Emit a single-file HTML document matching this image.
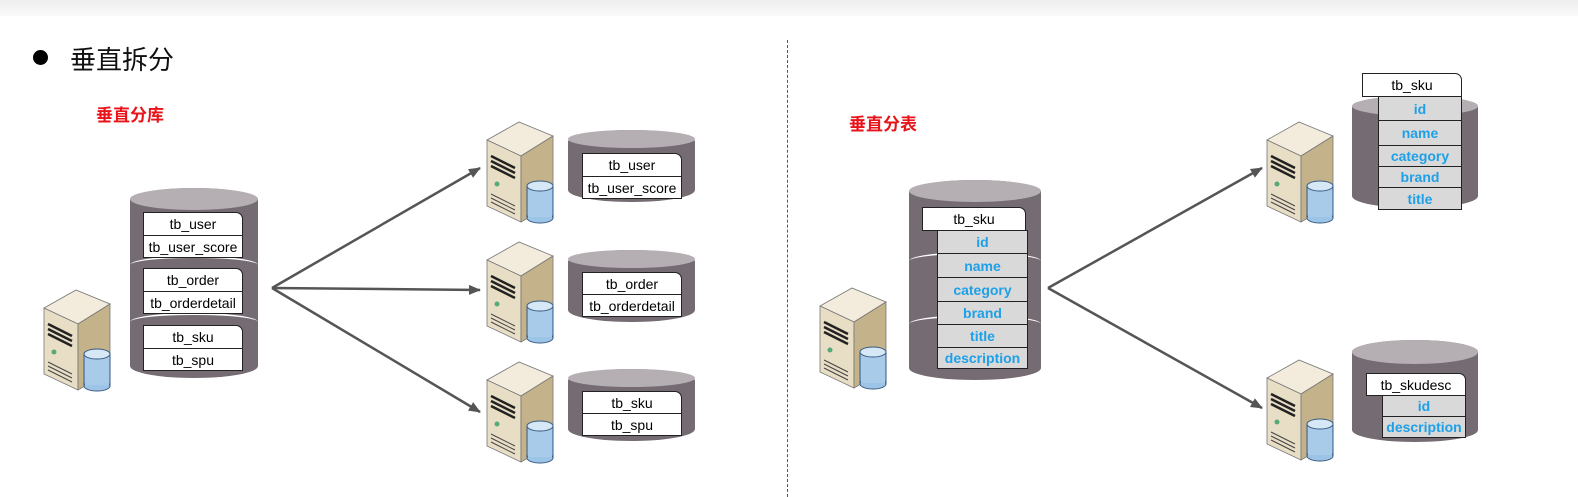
<!DOCTYPE html>
<html><head><meta charset="utf-8"><style>
body{margin:0;width:1578px;height:497px;background:#fff;position:relative;overflow:hidden;font-family:"Liberation Sans","Noto Sans CJK SC",sans-serif}
.a{position:absolute}
.cyl{position:absolute;background:#756b72;border-radius:50%/12px}
.cyl .top{position:absolute;left:0;top:0;right:0;height:22px;border-radius:50%;background:#b5aeb3}
.sep{position:absolute;left:0;right:0;height:16px;border-radius:50%;border-top:2px solid #fff}
.tb{position:absolute;background:#fff;border:1px solid #222;box-sizing:border-box;font-size:14px;color:#000;display:flex;align-items:center;justify-content:center;white-space:nowrap;font-family:"Liberation Sans","DejaVu Sans",sans-serif}
.tbt{border-top-right-radius:7px}
.f{position:absolute;background:#d9d9d9;border:1px solid #222;box-sizing:border-box;font-size:14px;font-weight:bold;color:#1ea0e8;display:flex;align-items:center;justify-content:center;white-space:nowrap}
</style></head><body>
<div class="a" style="left:0;top:0;width:1578px;height:16px;background:linear-gradient(#eee,#fafafa)"></div>
<div class="a" style="left:33px;top:50px;width:15px;height:15px;border-radius:50%;background:#000"></div>
<div class="a" style="left:70px;top:40px;font-size:26px;color:#111">垂直拆分</div>
<div class="a" style="left:96px;top:101px;font-size:17px;font-weight:bold;color:#e8141a">垂直分库</div>
<div class="a" style="left:849px;top:110px;font-size:17px;font-weight:bold;color:#e8141a">垂直分表</div>
<div class="a" style="left:787px;top:40px;height:457px;border-left:1px dashed #555"></div>

<svg class="a" style="left:0;top:0" width="1578" height="497">
<defs><marker id="m" markerWidth="12" markerHeight="10" refX="11" refY="5" orient="auto" markerUnits="userSpaceOnUse"><path d="M0,0 L12,5 L0,10 Z" fill="#555"/></marker>
<g id="srv">
<polygon points="2,26 34,8 68,22 36,42" fill="#f3ecdc" stroke="#777" stroke-width="0.8"/>
<polygon points="2,26 36,42 36,108 2,92" fill="#e8dec6" stroke="#777" stroke-width="0.8"/>
<polygon points="36,42 68,22 68,90 36,108" fill="#c4b28a" stroke="#777" stroke-width="0.8"/>
<path d="M6,42 L30,54 M6,47 L30,59 M6,52 L30,64" stroke="#222" stroke-width="2.5"/>
<circle cx="12" cy="70" r="2.5" fill="#5a7"/>
<path d="M6,80 L30,92 M6,84 L30,96 M6,88 L30,100" stroke="#444" stroke-width="1"/>
<rect x="42" y="72" width="26" height="32" fill="#9cc4e6" stroke="#3a5a80"/>
<ellipse cx="55" cy="104" rx="13" ry="5" fill="#9cc4e6" stroke="#3a5a80"/>
<rect x="43" y="73" width="24" height="30" fill="#a7cbe8"/>
<ellipse cx="55" cy="72" rx="13" ry="5" fill="#d6e8f6" stroke="#3a5a80"/>
</g></defs>
<g stroke="#555" stroke-width="2.5" fill="none" marker-end="url(#m)">
<line x1="272" y1="288" x2="480" y2="168"/><line x1="272" y1="288" x2="480" y2="290"/><line x1="272" y1="288" x2="480" y2="412"/>
<line x1="1048" y1="288" x2="1262" y2="168"/><line x1="1048" y1="288" x2="1262" y2="408"/>
</g>
<use href="#srv" x="42" y="282"/>
<use href="#srv" x="485" y="114"/>
<use href="#srv" x="485" y="234"/>
<use href="#srv" x="485" y="354"/>
<use href="#srv" x="818" y="280"/>
<use href="#srv" x="1265" y="114"/>
<use href="#srv" x="1265" y="352"/>
</svg>

<div class="cyl" style="left:130px;top:188px;width:128px;height:190px"><div class="top"></div>
<div class="sep" style="top:68px"></div><div class="sep" style="top:125px"></div></div>
<div class="tb tbt" style="left:143px;top:212px;width:100px;height:24px">tb_user</div>
<div class="tb" style="left:143px;top:235px;width:100px;height:23px">tb_user_score</div>
<div class="tb tbt" style="left:143px;top:268px;width:100px;height:24px">tb_order</div>
<div class="tb" style="left:143px;top:291px;width:100px;height:23px">tb_orderdetail</div>
<div class="tb tbt" style="left:143px;top:325px;width:100px;height:24px">tb_sku</div>
<div class="tb" style="left:143px;top:348px;width:100px;height:23px">tb_spu</div>

<div class="cyl" style="left:568px;top:130px;width:127px;height:72px"><div class="top" style="height:18px"></div></div>
<div class="tb tbt" style="left:582px;top:153px;width:100px;height:24px">tb_user</div>
<div class="tb" style="left:582px;top:176px;width:100px;height:23px">tb_user_score</div>
<div class="cyl" style="left:568px;top:250px;width:127px;height:72px"><div class="top" style="height:18px"></div></div>
<div class="tb tbt" style="left:582px;top:272px;width:100px;height:23px">tb_order</div>
<div class="tb" style="left:582px;top:294px;width:100px;height:23px">tb_orderdetail</div>
<div class="cyl" style="left:568px;top:369px;width:127px;height:72px"><div class="top" style="height:18px"></div></div>
<div class="tb tbt" style="left:582px;top:391px;width:100px;height:23px">tb_sku</div>
<div class="tb" style="left:582px;top:413px;width:100px;height:23px">tb_spu</div>

<div class="cyl" style="left:909px;top:180px;width:132px;height:200px"><div class="top"></div>
<div class="sep" style="top:72px"></div><div class="sep" style="top:135px"></div></div>
<div class="tb tbt" style="left:922px;top:207px;width:104px;height:24px">tb_sku</div>
<div class="f" style="left:937px;top:230px;width:91px;height:24px">id</div>
<div class="f" style="left:937px;top:253px;width:91px;height:25px">name</div>
<div class="f" style="left:937px;top:277px;width:91px;height:25px">category</div>
<div class="f" style="left:937px;top:301px;width:91px;height:24px">brand</div>
<div class="f" style="left:937px;top:324px;width:91px;height:24px">title</div>
<div class="f" style="left:937px;top:347px;width:91px;height:22px">description</div>

<div class="cyl" style="left:1352px;top:96px;width:126px;height:112px"><div class="top" style="height:20px"></div></div>
<div class="tb tbt" style="left:1362px;top:73px;width:100px;height:24px">tb_sku</div>
<div class="f" style="left:1378px;top:96px;width:84px;height:25px">id</div>
<div class="f" style="left:1378px;top:120px;width:84px;height:26px">name</div>
<div class="f" style="left:1378px;top:145px;width:84px;height:22px">category</div>
<div class="f" style="left:1378px;top:166px;width:84px;height:22px">brand</div>
<div class="f" style="left:1378px;top:187px;width:84px;height:23px">title</div>

<div class="cyl" style="left:1352px;top:340px;width:126px;height:102px"><div class="top" style="height:24px"></div></div>
<div class="tb tbt" style="left:1366px;top:373px;width:100px;height:23px">tb_skudesc</div>
<div class="f" style="left:1382px;top:395px;width:84px;height:22px">id</div>
<div class="f" style="left:1382px;top:416px;width:84px;height:22px">description</div>
</body></html>
